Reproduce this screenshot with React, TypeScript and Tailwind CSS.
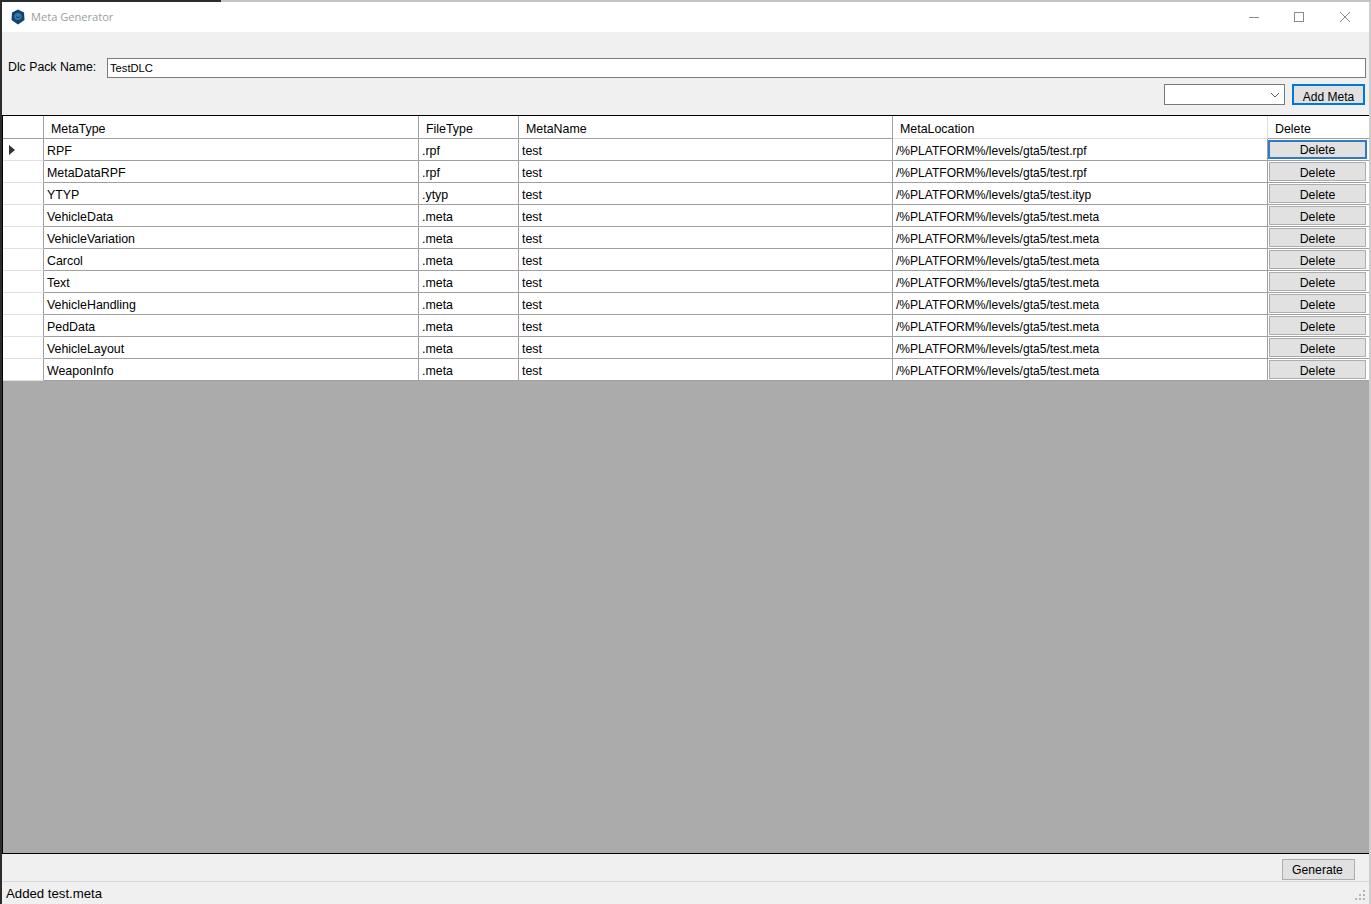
const rows = [
  ["RPF", ".rpf", "test", "/%PLATFORM%/levels/gta5/test.rpf"],
  ["MetaDataRPF", ".rpf", "test", "/%PLATFORM%/levels/gta5/test.rpf"],
  ["YTYP", ".ytyp", "test", "/%PLATFORM%/levels/gta5/test.ityp"],
  ["VehicleData", ".meta", "test", "/%PLATFORM%/levels/gta5/test.meta"],
  ["VehicleVariation", ".meta", "test", "/%PLATFORM%/levels/gta5/test.meta"],
  ["Carcol", ".meta", "test", "/%PLATFORM%/levels/gta5/test.meta"],
  ["Text", ".meta", "test", "/%PLATFORM%/levels/gta5/test.meta"],
  ["VehicleHandling", ".meta", "test", "/%PLATFORM%/levels/gta5/test.meta"],
  ["PedData", ".meta", "test", "/%PLATFORM%/levels/gta5/test.meta"],
  ["VehicleLayout", ".meta", "test", "/%PLATFORM%/levels/gta5/test.meta"],
  ["WeaponInfo", ".meta", "test", "/%PLATFORM%/levels/gta5/test.meta"],
];

const grid = "grid grid-cols-[41px_375px_100px_374px_375px_101px]";

function AppIcon() {
  return (
    <svg width="14" height="16" viewBox="0 0 14 16">
      <path d="M7 0.5 L13 3.5 L13.5 11 L7 15.5 L0.5 11 L1 3.5 Z" fill="#12436d" />
      <circle cx="7" cy="7.5" r="3.6" fill="#2b7fc0" />
      <circle cx="7" cy="7.5" r="1.5" fill="#0b2c4a" />
      <rect x="6" y="6.5" width="2" height="1" fill="#d9a441" />
    </svg>
  );
}

export default function App() {
  return (
    <div className="flex h-[904px] w-[1371px] flex-col overflow-hidden font-['Liberation_Sans',sans-serif] text-[12.4px] text-black">
      <div className="flex h-[2px] shrink-0">
        <div className="w-[221px] bg-[#2c2c2c]" />
        <div className="flex-1 bg-[#c4c4c4]" />
      </div>
      <div className="flex h-[902px] shrink-0">
        <div className="w-[2px] shrink-0 bg-[#2c2c2c]" />
        <div className="flex min-w-0 flex-1 flex-col bg-[#f0f0f0]">
          <div className="flex h-[30px] shrink-0 items-center bg-white pl-[9px]">
            <AppIcon />
            <span className="ml-[6px] font-['Open_Sans',sans-serif] text-[11.1px] text-[#99a0a0]">Meta Generator</span>
            <div className="ml-auto flex items-center pr-[19px]">
              <div className="h-px w-[10px] bg-[#8a8a8a]" />
              <div className="ml-[35px] h-[10px] w-[10px] border border-[#8a8a8a]" />
              <svg className="ml-[36px]" width="10" height="10" viewBox="0 0 10 10">
                <path d="M0 0L10 10M10 0L0 10" stroke="#8a8a8a" strokeWidth="1" fill="none" />
              </svg>
            </div>
          </div>

          <div className="h-[83px] shrink-0 pl-[6px] pr-[3px] pt-[26px]">
            <div className="flex items-center">
              <span className="mt-[-2px] w-[99px] shrink-0 text-[12.3px]">Dlc Pack Name:</span>
              <div className="flex h-[20px] flex-1 items-center border border-[#7a7a7a] bg-white pl-[2px] pt-px text-[11.2px]">TestDLC</div>
            </div>
            <div className="mt-[6px] flex items-center justify-end pr-px">
              <div className="flex h-[21px] w-[121px] items-center justify-end border border-[#7a7a7a] bg-white pr-[4px]">
                <svg width="10" height="6" viewBox="0 0 10 6">
                  <path d="M1 1L5 5L9 1" stroke="#555" strokeWidth="1" fill="none" />
                </svg>
              </div>
              <button className="ml-[7px] h-[21px] w-[73px] border-2 border-[#0078d7] bg-[#e1e1e1] pt-[4px] text-[12px] leading-none">Add Meta</button>
            </div>
          </div>

          <div className="flex h-[739px] shrink-0 flex-col border-y border-l border-black bg-[#ababab]">
            <div className={grid + " h-[23px] shrink-0 grid-rows-[23px] bg-white"}>
              <div className="border-b border-r border-[#a0a0a0]" />
              <div className="flex items-center border-b border-r border-[#a0a0a0] pl-[7px] pt-[4px]">MetaType</div>
              <div className="flex items-center border-b border-r border-[#a0a0a0] pl-[7px] pt-[4px]">FileType</div>
              <div className="flex items-center border-b border-r border-[#a0a0a0] pl-[7px] pt-[4px]">MetaName</div>
              <div className="flex items-center border-b border-r border-[#e0e0e0] pl-[7px] pt-[4px]">MetaLocation</div>
              <div className="flex items-center border-b border-[#a0a0a0] pl-[7px] pt-[4px]">Delete</div>
            </div>
            {rows.map((r, i) => (
              <div key={i} className={grid + " h-[22px] shrink-0 grid-rows-[22px] bg-white"}>
                <div className="flex items-center border-b border-r border-b-[#e0e0e0] border-r-[#a0a0a0] pl-[6px]">
                  {i === 0 && (
                    <svg width="6" height="10" viewBox="0 0 6 10">
                      <path d="M0 0L6 5L0 10Z" fill="#333" />
                    </svg>
                  )}
                </div>
                <div className="flex items-center border-b border-r border-[#a0a0a0] pl-[3px] pt-[3px]">{r[0]}</div>
                <div className="flex items-center border-b border-r border-[#a0a0a0] pl-[3px] pt-[3px]">{r[1]}</div>
                <div className="flex items-center border-b border-r border-[#a0a0a0] pl-[3px] pt-[3px]">{r[2]}</div>
                <div className="flex items-center border-b border-r border-[#a0a0a0] pl-[3px] pt-[3px] text-[12.05px]">{r[3]}</div>
                <div className={(i === 0 ? "pr-[2px]" : "pr-[3px] pl-px") + " border-b border-[#a0a0a0] py-px"}>
                  <button className={(i === 0 ? "border-2 border-[#2e7cc4] pt-[2px] " : "border border-[#adadad] pt-[4px] ") + "block h-[19px] w-full bg-[#e1e1e1] text-[12.3px] leading-none"}>Delete</button>
                </div>
              </div>
            ))}
          </div>

          <div className="flex h-[27px] shrink-0 items-start justify-end pr-[14px] pt-[5px]">
            <button className="h-[21px] w-[73px] border border-[#adadad] bg-[#e1e1e1] pr-[2px] pt-px text-[12.2px]">Generate</button>
          </div>

          <div className="relative flex h-[23px] shrink-0 items-center border-t border-[#d7d7d7] pl-[4px] pt-[2px] text-[13.2px]">
            Added test.meta
            <svg className="absolute bottom-[3px] right-[3px]" width="11" height="11" viewBox="0 0 11 11">
              <path d="M8 0h2v2H8zM4 4h2v2H4zM8 4h2v2H8zM0 8h2v2H0zM4 8h2v2H4zM8 8h2v2H8z" fill="#b4b4b4" />
            </svg>
          </div>
        </div>
        <div className="w-[2px] shrink-0 bg-[#cdcdcd]" />
      </div>
    </div>
  );
}
